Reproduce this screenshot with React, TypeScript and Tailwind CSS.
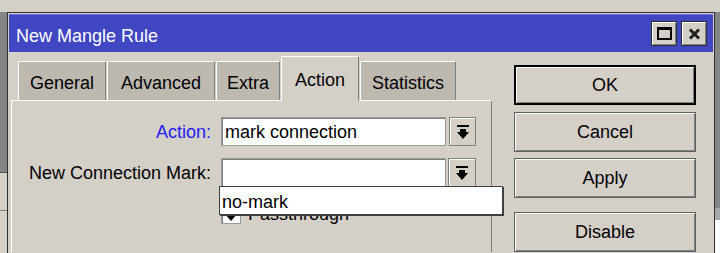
import React from "react";

const font = { fontFamily: '"Liberation Sans", Arial, sans-serif' };

function DropIcon() {
  return (
    <svg width="12" height="14" viewBox="0 0 12 14">
      <rect x="0" y="0" width="12" height="2" fill="#000" />
      <rect x="3" y="4" width="6" height="4" fill="#000" />
      <polygon points="0,7 12,7 6,14" fill="#000" />
    </svg>
  );
}

function Tab({ label, w, selected }: { label: string; w: string; selected?: boolean }) {
  if (selected) {
    return (
      <div
        className={`${w} h-[45px] -mb-px relative z-10 bg-[#d4d0c8] border-t border-l border-white border-r border-r-[#808080] flex justify-center pt-[13px] leading-[20px] text-[18px] text-black`}
      >
        {label}
      </div>
    );
  }
  return (
    <div
      className={`${w} h-[39px] bg-[#bdb9b1] border-t border-l border-white border-r border-r-[#808080] flex justify-center pt-[11px] leading-[20px] text-[18px] text-black`}
    >
      {label}
    </div>
  );
}

function Btn({ label, def, mt }: { label: string; def?: boolean; mt: string }) {
  return (
    <div
      className={`${mt} w-[182px] h-[40px] ${def ? "border-2 border-black" : "border border-[#606060]"} bg-[#d4d0c8] shadow-[inset_1px_1px_0_#ffffff,inset_-1px_-1px_0_#808080] flex items-center justify-center text-[18px] leading-[20px] text-black`}
    >
      {label}
    </div>
  );
}

export default function App() {
  return (
    <div className="w-[720px] h-[253px] overflow-hidden bg-[#d4d0c8] flex flex-col" style={font}>
      <div className="h-[12px] shrink-0" />
      <div className="flex h-[241px]">
        {/* left background strip */}
        <div className="w-[7px] shrink-0 flex flex-col">
          <div className="h-[160px] bg-[#858585]" />
          <div className="h-px bg-[#505050]" />
          <div className="h-[37px] bg-[#d4d0c8]" />
          <div className="h-px bg-[#808080]" />
          <div className="flex-1 bg-[#d4d0c8]" />
        </div>
        {/* window */}
        <div className="w-[708px] shrink-0 border-l border-t border-r border-[#303030] bg-[#d4d0c8] p-px flex flex-col">
          {/* title bar */}
          <div className="h-[38px] shrink-0 bg-[#4146c3] flex items-start pl-[7px] pr-[6px] border-t border-[#6a70e0]">
            <div className="pt-[11px] text-[18px] leading-[20px] text-white">New Mangle Rule</div>
            <div className="flex-1" />
            <div className="mt-[6px] flex gap-[4px]">
              <div className="w-[26px] h-[25px] bg-[#d4d0c8] border border-[#303030] shadow-[inset_1px_1px_0_#ffffff,inset_-1px_-1px_0_#808080] flex items-center justify-center">
                <div className="w-[15px] h-[13px] border-2 border-t-[3px] border-black" />
              </div>
              <div className="w-[26px] h-[25px] bg-[#d4d0c8] border border-[#303030] shadow-[inset_1px_1px_0_#ffffff,inset_-1px_-1px_0_#808080] flex items-center justify-center">
                <svg width="13" height="12" viewBox="0 0 13 12">
                  <path d="M2 1.5 L11 10.5 M11 1.5 L2 10.5" stroke="#202020" strokeWidth="3" />
                </svg>
              </div>
            </div>
          </div>
          {/* body */}
          <div className="flex-1 flex relative pt-[4px] pl-[2px]">
            {/* left column */}
            <div className="w-[481px] flex flex-col">
              <div className="h-[44px] flex items-end pl-[7px] gap-px">
                <Tab label="General" w="w-[88px]" />
                <Tab label="Advanced" w="w-[108px]" />
                <Tab label="Extra" w="w-[64px]" />
                <Tab label="Action" w="w-[78px]" selected />
                <Tab label="Statistics" w="w-[96px]" />
              </div>
              <div className="flex-1 border-t border-l border-white border-r border-r-[#808080] pt-[16px] flex flex-col">
                <div className="flex items-center h-[29px]">
                  <div className="w-[199px] text-right text-[18px] leading-[20px] text-[#2020f0]">Action:</div>
                  <div className="ml-[10px] w-[225px] h-[29px] bg-white border border-[#9a9a9a] shadow-[inset_1px_1px_0_#808080] flex items-center pl-[3px] text-[18px] leading-[20px] text-black">
                    mark connection
                  </div>
                  <div className="ml-[3px] w-[27px] h-[29px] bg-[#d4d0c8] border border-[#808080] shadow-[inset_1px_1px_0_#ffffff] flex items-center justify-center">
                    <DropIcon />
                  </div>
                </div>
                <div className="flex items-center h-[30px] mt-[12px]">
                  <div className="w-[199px] text-right text-[18px] leading-[20px] text-black">New Connection Mark:</div>
                  <div className="ml-[10px] w-[225px] h-[30px] bg-white border border-[#9a9a9a] shadow-[inset_1px_1px_0_#808080]" />
                  <div className="ml-[2px] w-[28px] h-[30px] bg-[#d4d0c8] border border-[#808080] shadow-[inset_1px_1px_0_#ffffff] flex items-center justify-center">
                    <DropIcon />
                  </div>
                </div>
                <div className="flex items-center h-[20px] mt-[16px]">
                  <div className="ml-[209px] w-[20px] h-[20px] bg-white border border-[#9a9a9a] shadow-[inset_1px_1px_0_#808080]">
                    <svg width="18" height="18" viewBox="0 0 18 18">
                      <polygon points="2,8 16,8 9,16" fill="#000" />
                    </svg>
                  </div>
                  <div className="ml-[7px] text-[18px] leading-[20px] text-black">Passthrough</div>
                </div>
              </div>
            </div>
            {/* right column buttons */}
            <div className="ml-[22px] flex flex-col">
              <Btn label="OK" def mt="mt-[9px]" />
              <Btn label="Cancel" mt="mt-[7px]" />
              <Btn label="Apply" mt="mt-[6px]" />
              <Btn label="Disable" mt="mt-[14px]" />
            </div>
            {/* dropdown popup */}
            <div className="absolute left-[210px] top-[134px] w-[284px] h-[29px] bg-white border border-[#404040] shadow-[1px_1px_0_#404040] z-20 pl-[2px] pt-[5px] text-[18px] leading-[20px] text-black">
              no-mark
            </div>
          </div>
        </div>
        {/* right background strip */}
        <div className="flex-1 flex flex-col">
          <div className="h-[196px] bg-[#858585]" />
          <div className="h-[12px] bg-[#a8a8a8]" />
          <div className="flex-1 bg-white" />
        </div>
      </div>
    </div>
  );
}
